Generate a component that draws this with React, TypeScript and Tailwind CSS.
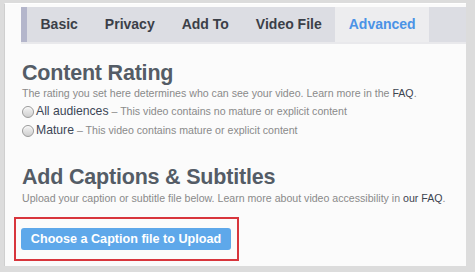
import React from "react";

const font = { fontFamily: '"Liberation Sans", Arial, Helvetica, sans-serif' };

function Radio() {
  return (
    <span className="inline-block w-[12px] h-[12px] rounded-full border border-[#9a9a9a] bg-gradient-to-b from-[#f4f4f4] to-[#cfcfcf] shadow-[inset_0_1px_1px_rgba(255,255,255,0.8)] mr-[2px] shrink-0" />
  );
}

export default function App() {
  const tabs = ["Basic", "Privacy", "Add To", "Video File", "Advanced"];
  return (
    <div className="w-[475px] h-[272px] bg-[#dcdcdc] overflow-hidden" style={font}>
      <div className="ml-[4px] mt-[3px] w-[462px] h-[263px] bg-[#fbfbfb] border-l border-[#cfcfcf] border-t border-t-[#ffffff] pt-[3px] pl-[16px]">
        <div className="flex h-[35px] bg-[#dcdde3] border-b-2 border-[#e9e9ec] box-content">
          <div className="w-[6px] bg-[#b4b6cb]" />
          {tabs.map((t) => (
            <div
              key={t}
              className={
                "px-[13.5px] flex items-center text-[14px] font-bold " +
                (t === "Advanced" ? "bg-[#ededef] text-[#4b93e6]" : "text-[#3b3f48]")
              }
            >
              {t}
            </div>
          ))}
        </div>

        <div className="pl-[1px]">
          <h2 className="mt-[17px] text-[21.5px] leading-[24px] font-bold text-[#545c66] tracking-[-0.2px]">
            Content Rating
          </h2>
          <p className="mt-[2px] text-[10.6px] leading-[12px] text-[#8a8a8a]">
            The rating you set here determines who can see your video. Learn more in the{" "}
            <span className="text-[#3d4450]">FAQ</span>.
          </p>
          <div className="mt-[4px] flex items-center h-[17px]">
            <Radio />
            <span className="text-[12.2px] text-[#3b4656]">All audiences</span>
            <span className="text-[10.6px] text-[#8a8a8a] ml-[3px]">– This video contains no mature or explicit content</span>
          </div>
          <div className="mt-[2px] flex items-center h-[17px]">
            <Radio />
            <span className="text-[12.2px] text-[#3b4656]">Mature</span>
            <span className="text-[10.6px] text-[#8a8a8a] ml-[3px]">– This video contains mature or explicit content</span>
          </div>

          <h2 className="mt-[26px] text-[21.5px] leading-[24px] font-bold text-[#545c66] tracking-[-0.2px]">
            Add Captions &amp; Subtitles
          </h2>
          <p className="mt-[3px] text-[10.6px] leading-[12px] text-[#8a8a8a]">
            Upload your caption or subtitle file below. Learn more about video accessibility in{" "}
            <span className="text-[#3d4450]">our FAQ</span>.
          </p>
        </div>

        <div className="mt-[13px] -ml-[7px] w-[225px] h-[44px] border-2 border-[#d8353c] flex items-center pl-[5px]">
          <button className="h-[22px] w-[210px] rounded-[3px] bg-[#5ea8ea] text-white text-[12.6px] font-bold">
            Choose a Caption file to Upload
          </button>
        </div>
      </div>
    </div>
  );
}
